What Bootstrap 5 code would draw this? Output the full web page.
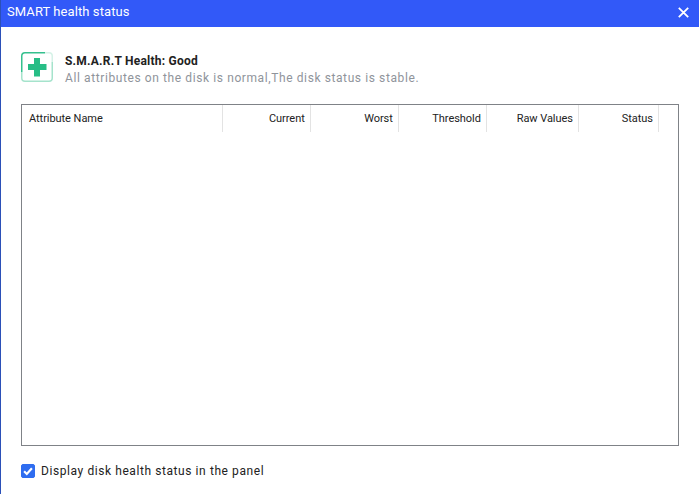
<!DOCTYPE html>
<html lang="en"><head><meta charset="utf-8"><title>SMART health status</title>
<link href="https://cdn.jsdelivr.net/npm/bootstrap@5.3.0/dist/css/bootstrap.min.css" rel="stylesheet">
<style>
html,body{height:494px;overflow:hidden;background:#fff}
body{font-family:Roboto,"Liberation Sans",sans-serif;color:#222}
.win{width:699px;height:494px;border-left:1px solid #2b50b8}
.bar{height:27px;background:#3259f8;color:#fff;font-size:13px;letter-spacing:.08px;padding:0 10px 3px 6px}
.bar svg{display:block}
.main{padding:25px 20px 0 20px}
.state{height:52px}
.ico{width:33px;height:33px}
.ttl{font-size:12px;font-weight:700;letter-spacing:.23px;color:#222;line-height:16px;padding-top:1px}
.sub{font-size:12px;letter-spacing:.6px;color:#8f949b;line-height:17px;margin-top:1px}
.textcol{margin-left:3px}
.grid-box{width:658px;height:342px;border:1px solid #7f8287}
.attr{table-layout:fixed;width:637px;margin:0;font-size:11px;--bs-table-bg:transparent}
.attr th{font-weight:400;color:#222;height:27px;padding:1px 5px 0 7px;border:0;border-right:1px solid #e3e3e3;text-align:right;vertical-align:middle;letter-spacing:-.05px}
.attr th:first-child{text-align:left}
.opt{margin-top:16px;height:18px;font-size:12px;letter-spacing:.58px;color:#222}
.opt .form-check-input{width:14px;height:14px;margin:0;border-radius:2px;background-color:#2f6df0;border-color:#2f6df0;flex:none;background-size:100%;background-image:url("data:image/svg+xml,%3csvg xmlns='http://www.w3.org/2000/svg' viewBox='0 0 20 20'%3e%3cpath fill='none' stroke='%23fff' stroke-width='3.600' d='M3.500 10.500l4.500 4.500 8.500-9.500'/%3e%3c/svg%3e")}
.opt label{margin-left:-2px}
</style></head>
<body>
<div class="win d-flex flex-column">
<div class="bar d-flex align-items-center justify-content-between"><span>SMART health status</span>
<svg width="11" height="11" viewBox="0 0 11 11"><path d="M.8.8l9.4 9.4M10.200.8L.8 10.200" stroke="#fff" stroke-width="1.800" fill="none"/></svg></div>
<div class="main">
<div class="state d-flex gap-2">
<svg class="ico" viewBox="0 0 33 33"><path d="M24 .75H4Q.75 .75 .75 4V20" fill="none" stroke="#35c08e" stroke-width="1.500"/><path d="M.75 20V26Q.75 29.250 4 29.250H28Q31.250 29.250 31.250 26V10" fill="none" stroke="#a5e3cc" stroke-width="1.500"/><path d="M24 .75H28Q31.250 .75 31.250 4V10" fill="none" stroke="#d5f2e7" stroke-width="1.500"/><path d="M13 6h6v6h6.500v6H19v6.500h-6V18H7v-6h6z" fill="#27bd86"/></svg>
<div class="textcol"><div class="ttl">S.M.A.R.T Health: Good</div><div class="sub">All attributes on the disk is normal,The disk status is stable.</div></div>
</div>
<div class="grid-box">
<table class="table attr"><colgroup><col style="width:200px"><col style="width:88px"><col style="width:88px"><col style="width:88px"><col style="width:92px"><col style="width:80px"></colgroup>
<thead><tr><th>Attribute Name</th><th>Current</th><th>Worst</th><th>Threshold</th><th>Raw Values</th><th>Status</th></tr></thead></table>
</div>
<div class="opt d-flex align-items-center gap-2">
<input class="form-check-input" type="checkbox" checked id="panelchk"><label for="panelchk">Display disk health status in the panel</label>
</div>
</div>
</div>
</body></html>
